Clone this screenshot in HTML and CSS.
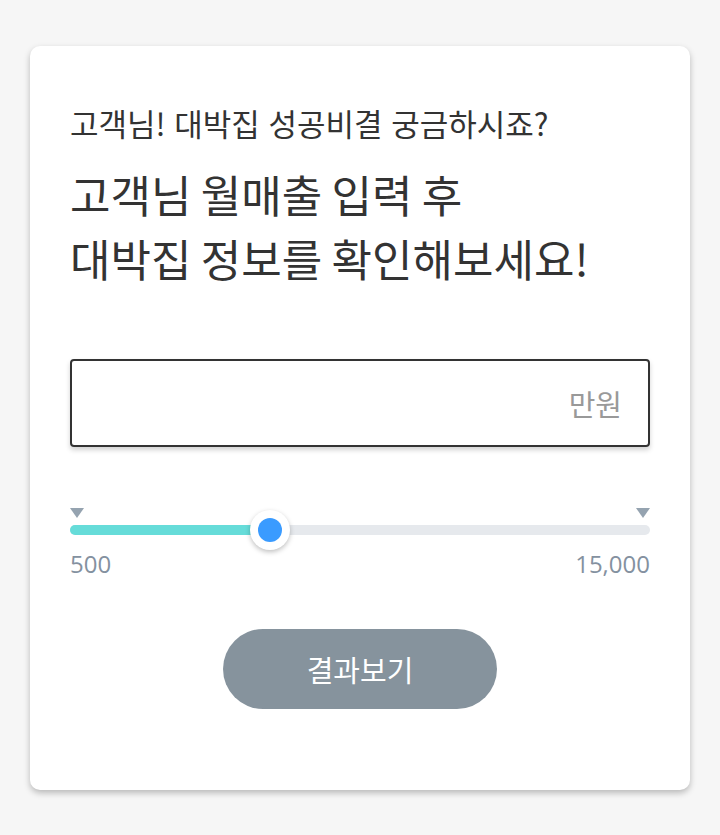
FILE: index.html
```html
<!DOCTYPE html>
<html lang="ko">
<head>
<meta charset="utf-8">
<link rel="stylesheet" href="styles.css">
</head>
<body>
<div class="card">
  <p class="sub">고객님! 대박집 성공비결 궁금하시죠?</p>
  <h1 class="title">고객님 월매출 입력 후<br>대박집 정보를 확인해보세요!</h1>
  <div class="input-box">
    <span class="unit">만원</span>
  </div>
  <div class="slider">
    <div class="marks">
      <span class="tri"></span>
      <span class="tri"></span>
    </div>
    <div class="track">
      <div class="fill" style="width: 200px;"></div>
      <div class="thumb" style="left: 200px;"></div>
    </div>
    <div class="labels">
      <span>500</span>
      <span>15,000</span>
    </div>
  </div>
  <div class="actions">
    <button class="btn">결과보기</button>
  </div>
</div>
</body>
</html>
```
FILE: styles.css
```css
* { box-sizing: border-box; }
html, body { margin: 0; padding: 0; }
body {
  background: #f6f6f6;
  font-family: "Noto Sans CJK KR", "Noto Sans", sans-serif;
  color: #333;
  padding: 46px 30px 45px;
}
.card {
  background: #fff;
  border-radius: 10px;
  box-shadow: 0 3px 6px rgba(0,0,0,0.25);
  padding: 52px 40px 80px;
  height: 744px;
}
.sub {
  margin: 0;
  font-size: 31px;
  line-height: 50px;
}
.title {
  margin: 14px 0 0;
  font-size: 44px;
  font-weight: 400;
  line-height: 64px;
  word-spacing: -3px;
}
.input-box {
  margin-top: 69px;
  height: 88px;
  border: 2px solid #333;
  border-radius: 4px;
  box-shadow: 0 3px 5px rgba(0,0,0,0.18);
  display: flex;
  align-items: center;
  justify-content: flex-end;
  padding-right: 26px;
}
.unit {
  font-size: 29px;
  color: #999;
}
.slider { margin-top: 61px; }
.marks {
  display: flex;
  justify-content: space-between;
  height: 17px;
}
.tri {
  width: 0; height: 0;
  border-left: 7px solid transparent;
  border-right: 7px solid transparent;
  border-top: 10px solid #95a3b0;
}
.track {
  position: relative;
  height: 10px;
  border-radius: 5px;
  background: #e6e9ed;
}
.fill {
  height: 10px;
  border-radius: 5px;
  background: #66dcd9;
}
.thumb {
  position: absolute;
  top: 50%;
  width: 40px;
  height: 40px;
  margin-left: -20px;
  margin-top: -20px;
  border-radius: 50%;
  background: #fff;
  box-shadow: 0 2px 5px rgba(0,0,0,0.25);
  display: flex;
  align-items: center;
  justify-content: center;
}
.thumb::after {
  content: "";
  width: 24px;
  height: 24px;
  border-radius: 50%;
  background: #3a9bff;
}
.labels {
  display: flex;
  justify-content: space-between;
  margin-top: 14px;
  font-family: "Open Sans", "Noto Sans", sans-serif;
  font-size: 24px;
  font-weight: 400;
  color: #8491a0;
  line-height: 30px;
}
.actions {
  display: flex;
  justify-content: center;
  margin-top: 50px;
}
.btn {
  width: 274px;
  height: 80px;
  border: none;
  border-radius: 40px;
  background: #86939d;
  color: #fff;
  font-family: "Noto Sans CJK KR", sans-serif;
  font-size: 29px;
}
```
